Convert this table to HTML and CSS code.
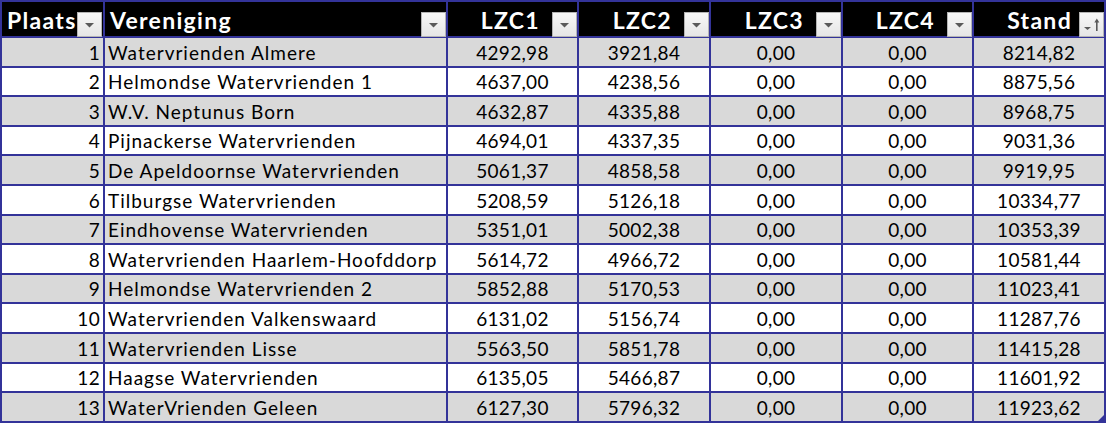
FILE: index.html
```html
<!DOCTYPE html>
<html lang="nl">
<head>
<meta charset="utf-8">
<title>Stand</title>
<link rel="stylesheet" href="styles.css">
</head>
<body>
<div class="table">
  <div class="th th-plaats"><span class="label">Plaats</span><span class="fbtn"><svg width="9" height="5" viewBox="0 0 9 5"><polygon points="0,0 9,0 4.5,4.5" fill="#5a5a5a"/></svg></span></div>
  <div class="th th-left"><span class="label">Vereniging</span><span class="fbtn"><svg width="9" height="5" viewBox="0 0 9 5"><polygon points="0,0 9,0 4.5,4.5" fill="#5a5a5a"/></svg></span></div>
  <div class="th th-num"><span class="label">LZC1</span><span class="fbtn"><svg width="9" height="5" viewBox="0 0 9 5"><polygon points="0,0 9,0 4.5,4.5" fill="#5a5a5a"/></svg></span></div>
  <div class="th th-num"><span class="label">LZC2</span><span class="fbtn"><svg width="9" height="5" viewBox="0 0 9 5"><polygon points="0,0 9,0 4.5,4.5" fill="#5a5a5a"/></svg></span></div>
  <div class="th th-num"><span class="label">LZC3</span><span class="fbtn"><svg width="9" height="5" viewBox="0 0 9 5"><polygon points="0,0 9,0 4.5,4.5" fill="#5a5a5a"/></svg></span></div>
  <div class="th th-num"><span class="label">LZC4</span><span class="fbtn"><svg width="9" height="5" viewBox="0 0 9 5"><polygon points="0,0 9,0 4.5,4.5" fill="#5a5a5a"/></svg></span></div>
  <div class="th th-num th-stand"><span class="label">Stand</span><span class="fbtn sort"><svg width="20" height="14" viewBox="0 0 20 14"><polygon points="2,9 9,9 5.5,12" fill="#5a5a5a"/><rect x="14" y="2" width="1.6" height="11" fill="#5a5a5a"/><polygon points="12.3,4.5 14.8,0.5 17.3,4.5" fill="#5a5a5a"/></svg></span></div>

  <div class="td r">1</div><div class="td l">Watervrienden Almere</div><div class="td c">4292,98</div><div class="td c">3921,84</div><div class="td c">0,00</div><div class="td c">0,00</div><div class="td c">8214,82</div>
  <div class="td w r">2</div><div class="td w l">Helmondse Watervrienden 1</div><div class="td w c">4637,00</div><div class="td w c">4238,56</div><div class="td w c">0,00</div><div class="td w c">0,00</div><div class="td w c">8875,56</div>
  <div class="td r">3</div><div class="td l">W.V. Neptunus Born</div><div class="td c">4632,87</div><div class="td c">4335,88</div><div class="td c">0,00</div><div class="td c">0,00</div><div class="td c">8968,75</div>
  <div class="td w r">4</div><div class="td w l">Pijnackerse Watervrienden</div><div class="td w c">4694,01</div><div class="td w c">4337,35</div><div class="td w c">0,00</div><div class="td w c">0,00</div><div class="td w c">9031,36</div>
  <div class="td r">5</div><div class="td l">De Apeldoornse Watervrienden</div><div class="td c">5061,37</div><div class="td c">4858,58</div><div class="td c">0,00</div><div class="td c">0,00</div><div class="td c">9919,95</div>
  <div class="td w r">6</div><div class="td w l">Tilburgse Watervrienden</div><div class="td w c">5208,59</div><div class="td w c">5126,18</div><div class="td w c">0,00</div><div class="td w c">0,00</div><div class="td w c">10334,77</div>
  <div class="td r">7</div><div class="td l">Eindhovense Watervrienden</div><div class="td c">5351,01</div><div class="td c">5002,38</div><div class="td c">0,00</div><div class="td c">0,00</div><div class="td c">10353,39</div>
  <div class="td w r">8</div><div class="td w l">Watervrienden Haarlem-Hoofddorp</div><div class="td w c">5614,72</div><div class="td w c">4966,72</div><div class="td w c">0,00</div><div class="td w c">0,00</div><div class="td w c">10581,44</div>
  <div class="td r">9</div><div class="td l">Helmondse Watervrienden 2</div><div class="td c">5852,88</div><div class="td c">5170,53</div><div class="td c">0,00</div><div class="td c">0,00</div><div class="td c">11023,41</div>
  <div class="td w r">10</div><div class="td w l">Watervrienden Valkenswaard</div><div class="td w c">6131,02</div><div class="td w c">5156,74</div><div class="td w c">0,00</div><div class="td w c">0,00</div><div class="td w c">11287,76</div>
  <div class="td r">11</div><div class="td l">Watervrienden Lisse</div><div class="td c">5563,50</div><div class="td c">5851,78</div><div class="td c">0,00</div><div class="td c">0,00</div><div class="td c">11415,28</div>
  <div class="td w r">12</div><div class="td w l">Haagse Watervrienden</div><div class="td w c">6135,05</div><div class="td w c">5466,87</div><div class="td w c">0,00</div><div class="td w c">0,00</div><div class="td w c">11601,92</div>
  <div class="td r">13</div><div class="td l">WaterVrienden Geleen</div><div class="td c">6127,30</div><div class="td c">5796,32</div><div class="td c">0,00</div><div class="td c">0,00</div><div class="td c">11923,62</div>
  <span class="handle"></span>
</div>
</body>
</html>
```

FILE: styles.css
```css
html, body {
  margin: 0;
  padding: 0;
  background: #ffffff;
}

.table {
  position: relative;
  display: grid;
  grid-template-columns: 101px 341px 129px 130px 130px 129px 130px;
  grid-template-rows: 34px;
  grid-auto-rows: 27.6px;
  gap: 2px;
  padding: 2px;
  width: 1106px;
  box-sizing: border-box;
  background: #333399;
  font-family: Lato, "Open Sans", sans-serif;
}

.th {
  background: #000000;
  color: #ffffff;
  font-weight: 700;
  font-size: 23px;
  letter-spacing: 1.3px;
  display: flex;
  align-items: flex-end;
  line-height: 1;
}

.th .label {
  padding-bottom: 4px;
}

.th-plaats {
  padding-left: 5px;
  gap: 0;
}

.th-left {
  padding-left: 5px;
  justify-content: space-between;
}

.th-num {
  justify-content: flex-end;
  gap: 12px;
}

.th-stand {
  gap: 7px;
}

.fbtn {
  width: 25px;
  height: 25px;
  box-sizing: border-box;
  border: 1px solid #b4b4b4;
  background: linear-gradient(#f7f7f7, #e6e6e6);
  display: flex;
  align-items: center;
  justify-content: center;
  flex: none;
  margin-bottom: -1px;
}

.fbtn svg {
  display: block;
  margin-top: 2px;
}

.fbtn.sort svg {
  margin-top: 0;
}

.td {
  background: #d9d9d9;
  color: #000000;
  font-size: 19px;
  display: flex;
  align-items: flex-end;
  line-height: 1;
  padding-bottom: 4px;
  box-sizing: border-box;
  white-space: nowrap;
}

.td.w {
  background: #ffffff;
}

.td.r {
  justify-content: flex-end;
  padding-right: 3px;
  letter-spacing: 0.3px;
}

.td.l {
  padding-left: 3px;
  letter-spacing: 1px;
}

.td.c {
  justify-content: center;
  letter-spacing: 0.3px;
}

.handle {
  position: absolute;
  right: 2px;
  bottom: 2px;
  width: 0;
  height: 0;
  border-left: 6px solid transparent;
  border-bottom: 6px solid #333399;
}
```
